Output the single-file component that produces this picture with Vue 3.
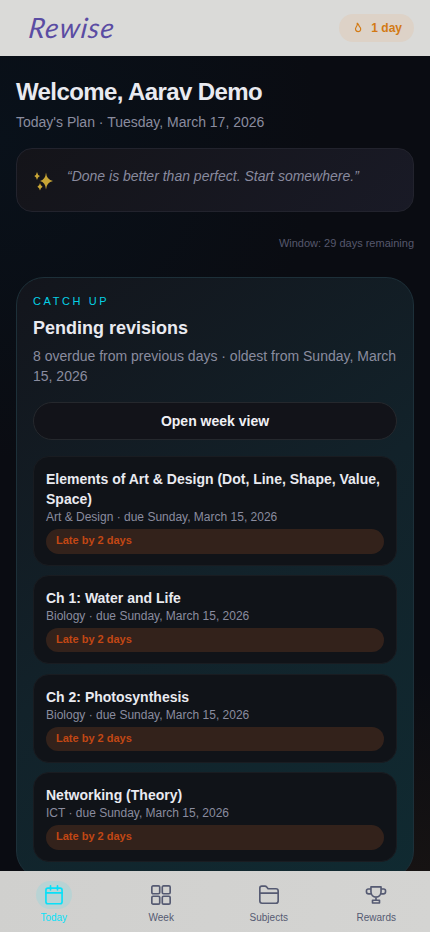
<script setup>
const tasks = [
  { title: 'Elements of Art & Design (Dot, Line, Shape, Value, Space)', subject: 'Art & Design' },
  { title: 'Ch 1: Water and Life', subject: 'Biology' },
  { title: 'Ch 2: Photosynthesis', subject: 'Biology' },
  { title: 'Networking (Theory)', subject: 'ICT' },
]
</script>

<template>
  <div class="app">
    <header class="topbar">
      <span class="logo">Rewise</span>
      <span class="streak">
        <svg class="flame" viewBox="0 0 12 14" fill="none" stroke="currentColor" stroke-width="1.2" stroke-linejoin="round">
          <path d="M5.2 2.2 C7.1 3.3 6.4 4.5 7.4 5.4 C9.8 7.7 8.7 10.6 6.1 10.6 C3.5 10.6 2.8 8 4.2 6 C5.3 4.6 5.8 3.8 5.2 2.2 Z" />
        </svg>
        1 day
      </span>
    </header>

    <main class="content">
      <h1>Welcome, Aarav Demo</h1>
      <p class="subtitle">Today's Plan · Tuesday, March 17, 2026</p>

      <section class="quote">
        <svg class="sparkles" viewBox="0 0 20 20" fill="#c9a636">
          <path d="M13 1.5 Q13.6 8.8 20 10 Q13.6 11.2 13 18.5 Q12.4 11.2 7 10 Q12.4 8.8 13 1.5Z" />
          <path d="M4 1 Q4.5 4.1 7 5 Q4.5 5.9 4 9 Q3.5 5.9 1.3 5 Q3.5 4.1 4 1Z" />
          <path d="M7 12 Q7.5 14.8 9.6 15.7 Q7.5 16.6 7 19.5 Q6.5 16.6 4.4 15.7 Q6.5 14.8 7 12Z" />
        </svg>
        <p>“Done is better than perfect. Start somewhere.”</p>
      </section>

      <p class="window">Window: 29 days remaining</p>

      <section class="catchup">
        <p class="eyebrow">CATCH UP</p>
        <h2>Pending revisions</h2>
        <p class="summary">8 overdue from previous days · oldest from Sunday, March 15, 2026</p>
        <button class="week-button">Open week view</button>
        <ul class="tasks">
          <li v-for="task in tasks" :key="task.title" class="task">
            <strong>{{ task.title }}</strong>
            <span class="meta">{{ task.subject }} · due Sunday, March 15, 2026</span>
            <span class="late">Late by 2 days</span>
          </li>
        </ul>
      </section>
    </main>

    <nav class="tabs">
      <a class="tab active">
        <span class="tab-icon">
          <svg viewBox="0 0 24 24"><rect x="3.2" y="4.5" width="17.6" height="17" rx="2.2" /><path d="M3.2 9.7H20.8M8.2 2V6.5M15.8 2V6.5" /></svg>
        </span>
        <span>Today</span>
      </a>
      <a class="tab">
        <span class="tab-icon">
          <svg viewBox="0 0 24 24"><rect x="2" y="2" width="8.6" height="8.6" rx="1.4" /><rect x="13.4" y="2" width="8.6" height="8.6" rx="1.4" /><rect x="2" y="13.4" width="8.6" height="8.6" rx="1.4" /><rect x="13.4" y="13.4" width="8.6" height="8.6" rx="1.4" /></svg>
        </span>
        <span>Week</span>
      </a>
      <a class="tab">
        <span class="tab-icon">
          <svg viewBox="0 0 24 24"><path d="M2 18.5V4.5Q2 2.3 4.2 2.3H7.6Q8.7 2.3 9.5 3.3L11 5.2H19.6Q22 5.2 22 7.5V18.5Q22 21 19.6 21H4.4Q2 21 2 18.5ZM2 10H22" /></svg>
        </span>
        <span>Subjects</span>
      </a>
      <a class="tab">
        <span class="tab-icon">
          <svg viewBox="0 0 24 24"><path d="M6.5 3.2H17.5V8.5C17.5 12 15 14.3 12 14.3S6.5 12 6.5 8.5ZM6.5 5.5H3.6Q1.6 5.5 1.6 7.5V8.4Q1.6 10.7 4.1 10.7H7M17.5 5.5H20.4Q22.4 5.5 22.4 7.5V8.4Q22.4 10.7 19.9 10.7H17M12 14.3V17.7M8.2 17.7H15.8V20.7H8.2Z" /></svg>
        </span>
        <span>Rewards</span>
      </a>
    </nav>
  </div>
</template>

<style>
body { margin: 0; background: #0a0c12; }
</style>

<style scoped>
* { box-sizing: border-box; }
h1, h2, p, ul { margin: 0; padding: 0; }
.app {
  height: 932px;
  display: flex;
  flex-direction: column;
  overflow: hidden;
  font-family: "Liberation Sans", Arial, sans-serif;
  color: #e9eaf0;
  background:
    radial-gradient(circle at 100% 100%, #1a1513 0, transparent 260px),
    radial-gradient(circle at 0 15%, #09111a 0, transparent 320px),
    #0a0c12;
}
.topbar {
  height: 56px;
  flex: none;
  display: flex;
  align-items: center;
  justify-content: space-between;
  padding: 0 16px 0 29px;
  background: #dadad8;
}
.logo {
  font-family: Lato, sans-serif;
  font-size: 28px;
  font-style: italic;
  font-weight: 400;
  line-height: 34px;
  letter-spacing: 1px;
  padding-bottom: 2px;
  transform: skewX(-7deg);
  color: #5a4ca3;
}
.streak {
  height: 28px;
  display: flex;
  align-items: center;
  gap: 7px;
  padding: 0 12px 0 13px;
  border-radius: 14px;
  background: #ddd2c7;
  color: #d37a14;
  font-size: 12px;
  font-weight: 700;
}
.flame { width: 12px; height: 14px; }
.content {
  flex: 1;
  min-height: 0;
  overflow: hidden;
  padding: 20px 16px 0;
}
h1 { font-size: 24px; line-height: 32px; letter-spacing: -0.6px; }
.subtitle { margin-top: 4px; font-size: 14px; line-height: 21px; color: #8a8c9f; }
.quote {
  height: 64px;
  margin-top: 15px;
  padding: 16px;
  display: flex;
  gap: 14px;
  border: 1px solid #22232d;
  border-radius: 16px;
  background: linear-gradient(135deg, #141419, #191a26);
}
.sparkles { width: 20px; height: 20px; margin-top: 6px; }
.quote p { font-size: 14px; line-height: 23px; font-style: italic; color: #898a9e; }
.window { margin-top: 23px; text-align: right; font-size: 11px; line-height: 17px; color: #56586d; }
.catchup {
  margin-top: 25px;
  padding: 15px 16px 16px;
  border: 1px solid #1d3039;
  border-radius: 28px;
  background: linear-gradient(145deg, #13151c 0%, #12222a 50%, #102a31 100%);
}
.eyebrow { font-size: 11px; line-height: 16px; letter-spacing: 2.6px; color: #05d0e6; }
h2 { margin-top: 6px; font-size: 18px; line-height: 26px; }
.summary { margin-top: 5px; font-size: 14px; line-height: 20px; color: #8a8c9f; }
.week-button {
  display: block;
  width: 100%;
  height: 38px;
  margin-top: 16px;
  border: 1px solid #25282d;
  border-radius: 19px;
  background: #121319;
  color: #f0f0f4;
  font: 700 14px "Liberation Sans", Arial, sans-serif;
}
.tasks { margin-top: 16.2px; display: grid; gap: 9.1px; list-style: none; }
.task {
  padding: 12px 12px 11.2px;
  display: flex;
  flex-direction: column;
  border: 1px solid #191c21;
  border-radius: 16px;
  background: #101318;
}
.task strong { font-size: 14px; line-height: 20px; }
.meta { font-size: 12px; line-height: 16px; color: #8a8c9f; }
.late {
  height: 24.4px;
  margin-top: 4px;
  padding: 0 10px;
  border-radius: 13px;
  background: #33221b;
  color: #c24714;
  font-size: 11px;
  font-weight: 700;
  line-height: 23px;
}
.tabs {
  height: 61px;
  flex: none;
  display: grid;
  grid-template-columns: repeat(4, 1fr);
  background: linear-gradient(100deg, #d0d0ce, #d4d4d2);
}
.tab {
  display: flex;
  flex-direction: column;
  align-items: center;
  padding-top: 10px;
  font-size: 10px;
  line-height: 14px;
  color: #555a72;
}
.tab-icon {
  width: 36px;
  height: 28px;
  margin-bottom: 2px;
  display: grid;
  place-items: center;
  border-radius: 14px;
}
.tab-icon svg { width: 22px; height: 22px; fill: none; stroke: currentColor; stroke-width: 1.8; stroke-linejoin: round; stroke-linecap: round; }
.active { color: #08e0f8; }
.active .tab-icon { background: #b9d3d4; }
</style>
